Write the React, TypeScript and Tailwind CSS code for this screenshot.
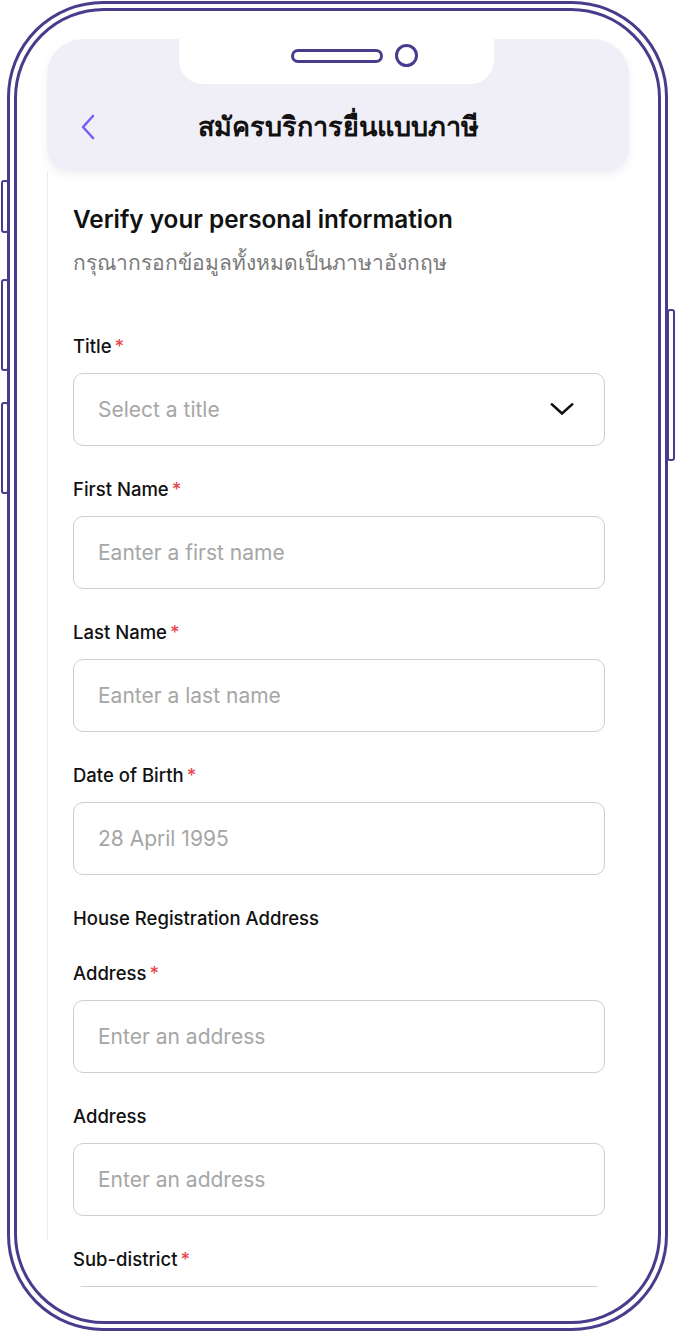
import React from 'react';

const font = { fontFamily: 'Inter, "Noto Sans", "DejaVu Sans", sans-serif' };

type Field = {
  label: string;
  placeholder: string;
  required?: boolean;
  select?: boolean;
};

const personal: Field[] = [
  { label: 'Title', placeholder: 'Select a title', required: true, select: true },
  { label: 'First Name', placeholder: 'Eanter a first name', required: true },
  { label: 'Last Name', placeholder: 'Eanter a last name', required: true },
  { label: 'Date of Birth', placeholder: '28 April 1995', required: true },
];

const Label: React.FC<{ text: string; required?: boolean }> = ({ text, required }) => (
  <div className="h-[24px] leading-[26px] text-[18.5px] font-medium text-[#111]">
    {text}
    {required && <span className="ml-[3px] text-[#e5484d]">*</span>}
  </div>
);

const Input: React.FC<{ field: Field }> = ({ field }) => (
  <div className="mt-[16px] h-[73px] w-[532px] rounded-[10px] border border-[#cfcfcf] bg-white pl-[24px] pr-[30px] flex items-center justify-between">
    <span className="text-[21px] text-[#a6a6a6]">{field.placeholder}</span>
    {field.select && (
      <svg width="24" height="24" viewBox="0 0 24 24" fill="none">
        <path d="M2 6.5 L12 15.5 L22 6.5" stroke="#111" strokeWidth="2.6" strokeLinecap="square" />
      </svg>
    )}
  </div>
);

const SideButton: React.FC<{ className: string }> = ({ className }) => (
  <div className={`absolute w-[8px] rounded-[3px] border-2 border-[#4b3b8c] bg-white ${className}`} />
);

export default function App() {
  return (
    <div className="relative w-[677px] h-[1334px] bg-white overflow-hidden" style={font}>
      <SideButton className="left-[1px] top-[180px] h-[53px]" />
      <SideButton className="left-[1px] top-[279px] h-[92px]" />
      <SideButton className="left-[1px] top-[402px] h-[92px]" />
      <SideButton className="left-[667px] top-[309px] h-[152px]" />

      <div className="relative ml-[7px] mt-[1px] w-[661px] h-[1330px] rounded-[96px] border-[3px] border-[#4b3b8c] bg-white p-[4px]">
        <div className="relative h-full rounded-[90px] border-[3px] border-[#4b3b8c] bg-white overflow-hidden">
          <div className="h-[1276px] overflow-hidden">
            {/* header */}
            <div className="relative ml-[30px] mt-[28px] w-[582px] h-[132px] rounded-t-[36px] rounded-b-[22px] bg-[#f0eff8] shadow-[0_4px_8px_rgba(60,50,120,0.07)]">
              <div className="absolute left-[132px] top-0 w-[315px] h-[45px] rounded-b-[24px] bg-white flex items-start pl-[112px]">
                <div className="mt-[10px] w-[92px] h-[14px] rounded-full border-[3px] border-[#4b3b8c]" />
                <div className="ml-[12px] mt-[5px] w-[23px] h-[23px] rounded-full border-[3px] border-[#4b3b8c]" />
              </div>
              <div className="relative pt-[72px] h-full">
                <div className="h-[32px] flex items-center justify-center">
                  <svg className="absolute left-[30px]" width="22" height="26" viewBox="0 0 22 26" fill="none">
                    <path d="M16 2 L6 13 L16 24" stroke="#7b5cf5" strokeWidth="2.6" strokeLinecap="round" strokeLinejoin="round" />
                  </svg>
                  <span className="text-[27px] font-semibold text-[#111]">สมัครบริการยื่นแบบภาษี</span>
                </div>
              </div>
            </div>

            {/* form */}
            <div className="ml-[30px] w-[582px] border-l border-[#ececf2] pl-[25px] pt-[33px] pb-[24px]">
              <h1 className="text-[24.3px] leading-[30px] font-semibold text-[#111]">Verify your personal information</h1>
              <p className="mt-[15px] text-[21px] leading-[28px] text-[#7a7a7a]">กรุณากรอกข้อมูลทั้งหมดเป็นภาษาอังกฤษ</p>

              <div className="mt-[56px] flex flex-col gap-[30px]">
                {personal.map((f) => (
                  <div key={f.label}>
                    <Label text={f.label} required={f.required} />
                    <Input field={f} />
                  </div>
                ))}
                <Label text="House Registration Address" />
              </div>

              <div className="mt-[31px] flex flex-col gap-[30px]">
                <div>
                  <Label text="Address" required />
                  <Input field={{ label: 'Address', placeholder: 'Enter an address' }} />
                </div>
                <div>
                  <Label text="Address" />
                  <Input field={{ label: 'Address2', placeholder: 'Enter an address' }} />
                </div>
              </div>
            </div>

            <div className="ml-[56px] mt-[6px]">
              <Label text="Sub-district" required />
              <div className="mt-[16px] h-[73px] w-[532px] rounded-[10px] border border-[#cfcfcf]" />
            </div>
          </div>
        </div>
      </div>
    </div>
  );
}
